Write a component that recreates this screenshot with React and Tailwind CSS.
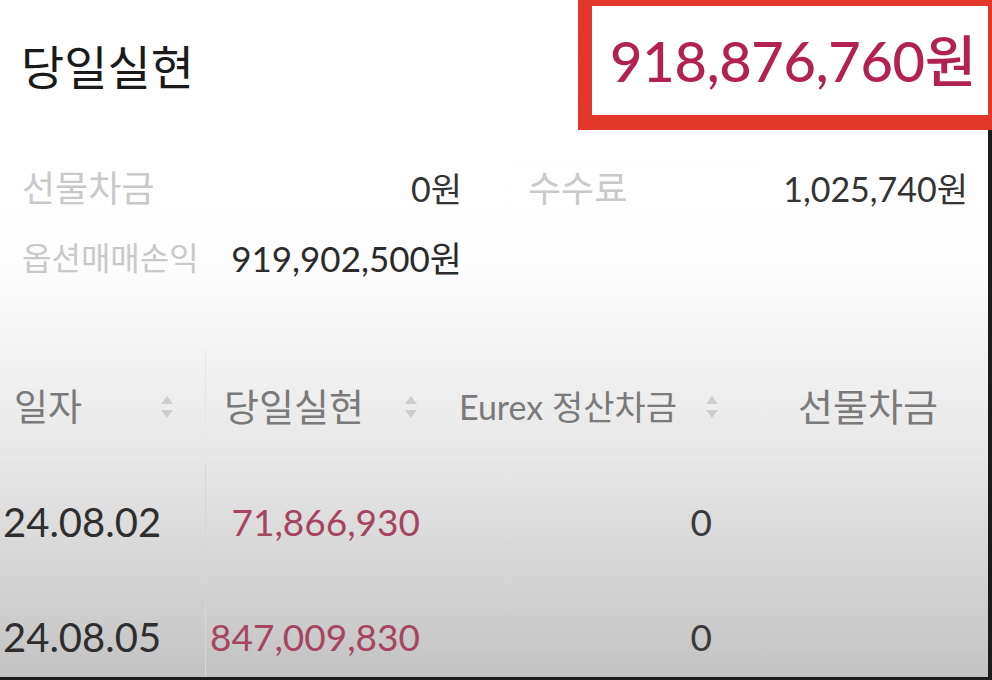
import React from "react";

const FONT = { fontFamily: 'Lato, "Noto Sans CJK KR", sans-serif' };

function SortIcon() {
  return (
    <svg width="14" height="30" viewBox="0 0 14 30" className="shrink-0">
      <path d="M7 4 L13 12 L1 12 Z" fill="#cdcdcd" />
      <path d="M7 26 L13 18 L1 18 Z" fill="#cdcdcd" />
    </svg>
  );
}

export default function App() {
  const rows = [
    { date: "24.08.02", pnl: "71,866,930", eurex: "0" },
    { date: "24.08.05", pnl: "847,009,830", eurex: "0" },
  ];
  return (
    <div
      style={FONT}
      className="w-[992px] h-[680px] overflow-hidden flex flex-col bg-[linear-gradient(to_bottom,#ffffff_0%,#fdfdfd_38%,#f3f3f3_52%,#e6e6e6_68%,#d4d4d4_85%,#c2c2c2_100%)]"
    >
      {/* Top */}
      <div className="h-[130px] flex justify-between shrink-0">
        <div className="pl-[21px] pt-[4px] flex items-center text-[47px] text-[#1a1a1a] leading-none">
          당일실현
        </div>
        <div className="w-[414px] h-[130px] border-t-[6px] border-l-[14px] border-b-[15px] border-r-[4px] border-[#e2372b] flex items-center justify-end pr-[12px] bg-white">
          <span className="text-[56px] font-medium text-[#b2214f] leading-none tracking-[-0.3px]">
            918,876,760원
          </span>
        </div>
      </div>

      {/* Rest */}
      <div className="flex-1 flex flex-col border-r-4 border-b-[3px] border-[#1c1c1c]">
        {/* Summary */}
        <div className="pt-[23px] flex flex-col">
          <div className="h-[70px] flex items-center">
            <div className="w-[462px] pl-[22px] flex items-center justify-between">
              <span className="text-[36px] text-[#c9c9c9]">선물차금</span>
              <span className="text-[34px] text-[#333]">0원</span>
            </div>
            <div className="ml-[66px] w-[440px] flex items-center justify-between">
              <span className="text-[36px] text-[#c9c9c9]">수수료</span>
              <span className="text-[34px] text-[#333]">1,025,740원</span>
            </div>
          </div>
          <div className="h-[70px] flex items-center">
            <div className="w-[462px] pl-[22px] flex items-center justify-between">
              <span className="text-[32px] text-[#c9c9c9]">옵션매매손익</span>
              <span className="text-[35px] text-[#2a2a2a]">919,902,500원</span>
            </div>
          </div>
        </div>

        {/* Table */}
        <div className="mt-[57px] flex flex-col flex-1">
          {/* Header */}
          <div className="h-[114px] flex items-center border-b border-[#e4e4e4] text-[37px] text-[#7a7a7a]">
            <div className="w-[205px] h-full pl-[14px] pr-[31px] flex items-center justify-between">
              <span>일자</span>
              <SortIcon />
            </div>
            <div className="w-[235px] h-full pl-[18px] pr-[22px] flex items-center justify-between border-l border-[#e6e6e6]">
              <span className="text-[38px]">당일실현</span>
              <SortIcon />
            </div>
            <div className="w-[300px] h-full pl-[19px] pr-[21px] flex items-center justify-between">
              <span className="text-[34px]">Eurex 정산차금</span>
              <SortIcon />
            </div>
            <div className="flex-1 h-full flex items-center justify-center pl-[8px]">
              <span className="text-[38px]">선물차금</span>
            </div>
          </div>

          {rows.map((r, i) => (
            <div
              key={r.date}
              className={
                i === 0
                  ? "h-[116px] flex items-center"
                  : "flex-1 flex items-center pt-[17px]"
              }
            >
              <div className="w-[205px] h-full pl-[3px] flex items-center text-[40px] text-[#2e2e2e]">
                {r.date}
              </div>
              <div className="w-[235px] h-full pr-[20px] flex items-center justify-end border-l border-[#d6d6d6] text-[37px] text-[#a5455f]">
                {r.pnl}
              </div>
              <div className="w-[300px] h-full pr-[28px] flex items-center justify-end text-[37px] text-[#3a3a3a]">
                {r.eurex}
              </div>
              <div className="flex-1 h-full" />
            </div>
          ))}
        </div>
      </div>
    </div>
  );
}
